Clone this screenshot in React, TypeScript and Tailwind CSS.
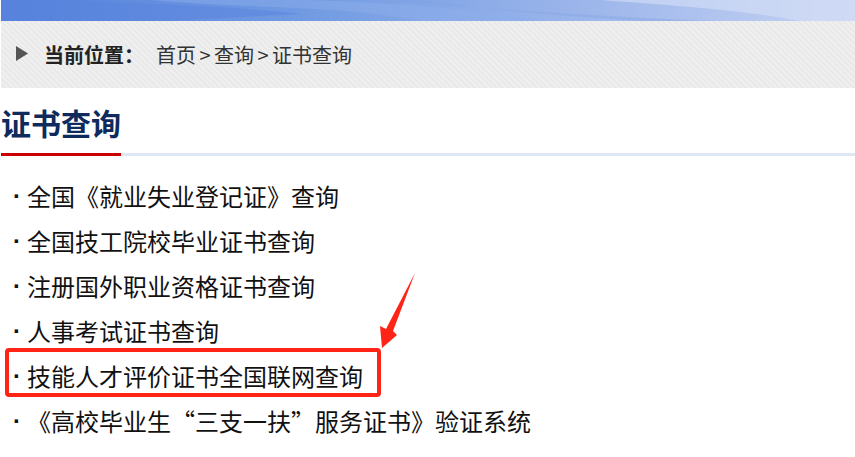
const items = [
  "全国《就业失业登记证》查询",
  "全国技工院校毕业证书查询",
  "注册国外职业资格证书查询",
  "人事考试证书查询",
  "技能人才评价证书全国联网查询",
  "《高校毕业生“三支一扶”服务证书》验证系统",
];

const crumbs = ["首页", "查询", "证书查询"];

function Banner() {
  return (
    <div className="relative h-[21px] overflow-hidden bg-[linear-gradient(90deg,#5781dc_0%,#709ae2_35%,#98b3ea_65%,#c6d3f3_100%)]">
      <svg className="absolute inset-0" width="854" height="21" viewBox="0 0 854 21" preserveAspectRatio="none">
        <path d="M60 0 C150 4 230 6 300 14 L160 21 L0 21 L0 0 Z" fill="#5883dd" opacity="0.5" />
        <path d="M150 0 C260 10 330 4 420 21 L540 21 C470 8 380 2 300 0 Z" fill="#8fb0ea" opacity="0.45" />
        <path d="M600 0 C680 6 740 10 800 21 L854 21 L854 0 Z" fill="#d6e0f7" opacity="0.6" />
        <path d="M380 0 C500 10 620 18 720 21 L640 21 C560 16 470 8 420 0 Z" fill="#7ea0e3" opacity="0.35" />
      </svg>
    </div>
  );
}

function Breadcrumb() {
  return (
    <div className="flex h-[67px] items-center bg-[repeating-linear-gradient(45deg,#efefef_0px,#efefef_2px,#e9e9e9_2px,#e9e9e9_4px)] pl-[15px] text-[20px]">
      <svg width="12" height="15" viewBox="0 0 12 15" className="mb-[3px] shrink-0">
        <polygon points="0,0 12,7.5 0,15" fill="#555555" />
      </svg>
      <span className="ml-[16px] w-[112px] shrink-0 font-bold text-[#222222]">当前位置：</span>
      <span className="flex text-[#333333]">
        {crumbs.map((c, i) => (
          <span key={c} className="flex">
            {i > 0 && <span className="inline-block w-[18px] text-center">&gt;</span>}
            <span>{c}</span>
          </span>
        ))}
      </span>
    </div>
  );
}

export default function App() {
  return (
    <div className="relative h-[457px] w-[855px] overflow-hidden bg-white font-['Microsoft_YaHei','Noto_Sans_CJK_SC',sans-serif]">
      <div className="pl-px">
        <Banner />
        <Breadcrumb />
      </div>

      <div className="flex h-[65px] items-center pl-px pt-[2px]">
        <h1 className="text-[30px] font-bold leading-none text-[#0f2a5c]">证书查询</h1>
      </div>
      <div className="flex h-[3px] pl-px">
        <div className="w-[120px] bg-[#cc0000]" />
        <div className="flex-1 bg-[#dfe7f2]" />
      </div>

      <ul className="mt-[17px]">
        {items.map((t) => (
          <li key={t} className="flex h-[45px] items-center pl-[13px] text-[24px] text-[#111111]">
            <span className="w-[14px] shrink-0 font-['Liberation_Sans',sans-serif] font-bold">·</span>
            <span>{t}</span>
          </li>
        ))}
      </ul>

      {/* annotation overlay */}
      <div className="pointer-events-none absolute left-[5px] top-[348px] h-[49px] w-[376px] rounded-[4px] border-[4px] border-[#ff2416]" />
      <svg className="pointer-events-none absolute left-0 top-0" width="855" height="457" viewBox="0 0 855 457">
        <polygon points="415,273 393,331 397,335 382,348 380,326 386,329" fill="#ff2416" />
      </svg>
    </div>
  );
}
